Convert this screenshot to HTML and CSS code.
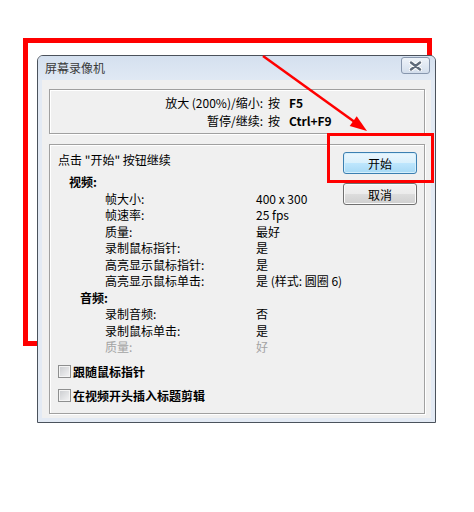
FILE: index.html
```html
<!DOCTYPE html>
<html>
  <head>
    <meta charset="utf-8">
    <link rel="stylesheet" href="styles.css">
  </head>
  <body>
    <div class="stage">
      <div class="mark-frame"></div>

      <div class="dialog">
        <div class="titlebar">
          <span class="title">屏幕录像机</span>
          <button class="close">
            <svg width="13" height="10" viewBox="0 0 13 10">
              <path d="M2 1.5 L11 8.5 M11 1.5 L2 8.5" stroke="#fff" stroke-width="4.4" stroke-linecap="round"/>
              <path d="M2 1.5 L11 8.5 M11 1.5 L2 8.5" stroke="#5f6b7a" stroke-width="2.4" stroke-linecap="round"/>
            </svg>
          </button>
        </div>

        <div class="client">
          <div class="group hotkeys">
            <div class="hot-label">放大 (200%)/缩小:</div><div class="hot-press">按</div><div class="hot-key">F5</div>
            <div class="hot-label">暂停/继续:</div><div class="hot-press">按</div><div class="hot-key">Ctrl+F9</div>
          </div>

          <div class="group settings">
            <div class="info">
              <div class="hint">点击 "开始" 按钮继续</div>
              <div class="props">
                <div class="head video">视频:</div>
                <div class="key">帧大小:</div><div class="val">400 x 300</div>
                <div class="key">帧速率:</div><div class="val">25 fps</div>
                <div class="key">质量:</div><div class="val">最好</div>
                <div class="key">录制鼠标指针:</div><div class="val">是</div>
                <div class="key">高亮显示鼠标指针:</div><div class="val">是</div>
                <div class="key">高亮显示鼠标单击:</div><div class="val">是 (样式: 圆圈 6)</div>
                <div class="head audio">音频:</div>
                <div class="key">录制音频:</div><div class="val">否</div>
                <div class="key">录制鼠标单击:</div><div class="val">是</div>
                <div class="key off">质量:</div><div class="val off">好</div>
              </div>
              <label class="check"><span class="box"></span>跟随鼠标指针</label>
              <label class="check"><span class="box"></span>在视频开头插入标题剪辑</label>
            </div>
            <div class="actions">
              <button class="btn default">开始</button>
              <button class="btn">取消</button>
            </div>
          </div>
        </div>
      </div>

      <div class="mark-focus"></div>
      <svg class="mark-arrow" width="474" height="512">
        <line x1="263" y1="56" x2="354" y2="121.5" stroke="#ff0000" stroke-width="2.5"/>
        <polygon points="367,131 356.7,116.2 349.7,126" fill="#ff0000"/>
      </svg>
    </div>
  </body>
</html>
```

FILE: styles.css
```css
* {
    box-sizing: border-box;
}
body {
    margin: 0;
    background: #fff;
    font-family: "Noto Sans CJK SC", sans-serif;
    font-size: 12px;
    color: #000;
}
.stage {
    position: relative;
    width: 474px;
    height: 512px;
    overflow: hidden;
    padding: 55px 0 0 37px;
}

/* red annotations */
.mark-frame {
    position: absolute;
    left: 23px;
    top: 38px;
    width: 409px;
    height: 308px;
    border: 5px solid #ff0000;
}
.mark-focus {
    position: absolute;
    z-index: 2;
    left: 327px;
    top: 133px;
    width: 107px;
    height: 50px;
    border: 3px solid #ff0000;
}
.mark-arrow {
    position: absolute;
    z-index: 2;
    left: 0;
    top: 0;
    pointer-events: none;
}

/* window */
.dialog {
    position: relative;
    z-index: 1;
    width: 399px;
    height: 368px;
    border: 1px solid #4b525c;
    border-radius: 6px 6px 0 0;
    background: #e3eaf4;
    display: flex;
    flex-direction: column;
}
.titlebar {
    height: 24px;
    display: flex;
    align-items: center;
    justify-content: space-between;
    padding: 0 5px 0 7px;
    border-radius: 5px 5px 0 0;
    background: linear-gradient(to bottom, #d4e0ef, #e0e9f4);
}
.title {
    color: #3a3a3a;
    line-height: 16px;
}
.close {
    align-self: flex-start;
    margin-top: 1px;
    width: 29px;
    height: 17px;
    padding: 0;
    border: 1px solid #8796ad;
    border-radius: 3px;
    background: linear-gradient(to bottom, #eef3f9, #d3deec);
    display: flex;
    align-items: center;
    justify-content: center;
}
.client {
    flex: 1;
    margin: 0 4px 4px;
    background: #f0f0f0;
    padding: 9px 6px 4px 7px;
    display: flex;
    flex-direction: column;
}
.group {
    border: 1px solid #a0a0a0;
    box-shadow: inset 1px 1px 0 #fff, 1px 1px 0 #fff;
}

/* hot keys */
.hotkeys {
    height: 45px;
    margin-bottom: 10px;
    padding-top: 4px;
    display: grid;
    grid-template-columns: 213px auto 1fr;
    grid-auto-rows: 18px;
    line-height: 18px;
}
.hot-label {
    text-align: right;
}
.hot-press {
    margin-left: 5px;
}
.hot-key {
    margin-left: 9px;
    font-weight: bold;
}

/* settings */
.settings {
    flex: 1;
    display: flex;
}
.info {
    flex: 1;
    padding: 7px 0 0 8px;
}
.hint {
    line-height: 16px;
}
.props {
    margin-top: 6px;
    display: grid;
    grid-template-columns: 47px 151px 1fr;
    grid-auto-rows: 16.5px;
    line-height: 16.5px;
}
.head {
    grid-column: 1 / -1;
    font-weight: bold;
}
.video {
    padding-left: 11px;
}
.audio {
    padding-left: 22px;
}
.key {
    grid-column: 2;
}
.val {
    grid-column: 3;
    white-space: nowrap;
}
.off {
    color: #a3a3a3;
}
.check {
    height: 24px;
    display: flex;
    align-items: center;
    gap: 2px;
    font-weight: bold;
}
.check:first-of-type {
    margin-top: 4px;
}
.box {
    width: 13px;
    height: 13px;
    border: 1px solid #8e8f8f;
    background: linear-gradient(135deg, #c9cbce, #f5f5f6);
    box-shadow: inset 0 0 0 1px #f4f4f4;
}
.actions {
    width: 74px;
    margin: 7px 7px 0 0;
    display: flex;
    flex-direction: column;
    gap: 9px;
}
.btn {
    height: 22px;
    padding: 0;
    font: inherit;
    color: #000;
    border: 1px solid #707070;
    border-radius: 3px;
    background: linear-gradient(to bottom, #f2f2f2 0%, #ebebeb 50%, #dddddd 51%, #cfcfcf 100%);
    box-shadow: inset 0 0 0 1px #fbfbfb;
}
.btn.default {
    border-color: #3c7fb1;
    background: linear-gradient(to bottom, #eaf6fd 0%, #d9f0fc 50%, #bee6fd 51%, #a7d9f5 100%);
    box-shadow: inset 0 0 0 1px #d5effc;
}
```
